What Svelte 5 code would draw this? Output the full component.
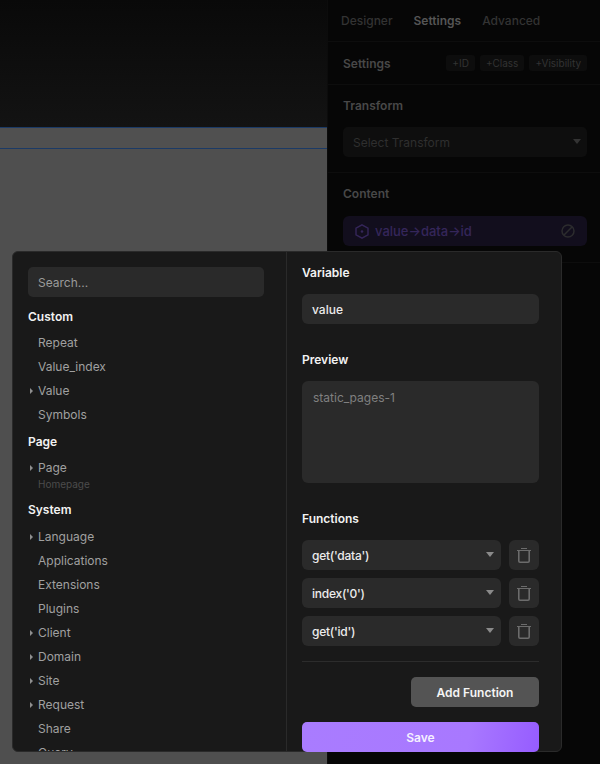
<script>
	const groups = [
		{
			title: 'Custom',
			items: [
				{ name: 'Repeat' },
				{ name: 'Value_index' },
				{ name: 'Value', arrow: true },
				{ name: 'Symbols' }
			]
		},
		{
			title: 'Page',
			items: [{ name: 'Page', arrow: true, sub: 'Homepage' }]
		},
		{
			title: 'System',
			items: [
				{ name: 'Language', arrow: true },
				{ name: 'Applications' },
				{ name: 'Extensions' },
				{ name: 'Plugins' },
				{ name: 'Client', arrow: true },
				{ name: 'Domain', arrow: true },
				{ name: 'Site', arrow: true },
				{ name: 'Request', arrow: true },
				{ name: 'Share' },
				{ name: 'Query' }
			]
		}
	];
	const functions = ["get('data')", "index('0')", "get('id')"];
</script>

<div class="app">
	<div class="workspace">
		<div class="topbar"></div>
		<div class="canvas">
			<div class="canvas-strip"></div>
		</div>
	</div>

	<aside class="sidebar">
		<nav class="tabs">
			<span>Designer</span>
			<span class="active">Settings</span>
			<span>Advanced</span>
		</nav>
		<section class="settings-row">
			<h4>Settings</h4>
			<div class="chips">
				<span>+ID</span>
				<span>+Class</span>
				<span>+Visibility</span>
			</div>
		</section>
		<section class="side-section transform">
			<h4>Transform</h4>
			<div class="side-select">
				Select Transform
				<i class="caret"></i>
			</div>
		</section>
		<section class="side-section content">
			<h4>Content</h4>
			<div class="binding">
				<svg width="14" height="15" viewBox="0 0 14 15" fill="none" stroke="currentColor" stroke-width="1.4">
					<path d="M7 .8 13 4.2V10.8L7 14.2 1 10.8V4.2Z" />
					<circle cx="7" cy="7.5" r="1.3" fill="currentColor" stroke="none" />
				</svg>
				<span>value→data→id</span>
				<svg class="ban" width="14" height="14" viewBox="0 0 14 14" fill="none" stroke="currentColor" stroke-width="1.5">
					<circle cx="7" cy="7" r="6" />
					<path d="M2.8 11.2 11.2 2.8" />
				</svg>
			</div>
		</section>
	</aside>

	<div class="modal">
		<div class="picker">
			<div class="search">Search...</div>
			{#each groups as group}
				<h5>{group.title}</h5>
				<ul>
					{#each group.items as item}
						<li class:has-sub={item.sub}>
							{#if item.arrow}<i class="arrow"></i>{/if}
							{item.name}
							{#if item.sub}<small>{item.sub}</small>{/if}
						</li>
					{/each}
				</ul>
			{/each}
		</div>
		<div class="editor">
			<h5>Variable</h5>
			<div class="field value">value</div>
			<h5 class="preview-title">Preview</h5>
			<div class="field preview">static_pages-1</div>
			<h5 class="functions-title">Functions</h5>
			<div class="functions">
				{#each functions as fn}
					<div class="fn-row">
						<div class="field fn">
							{fn}
							<i class="caret"></i>
						</div>
						<button class="trash" aria-label="Delete">
							<svg width="14" height="15" viewBox="0 0 14 15" fill="none" stroke="currentColor">
								<path d="M4 .5H10M0 2.5H14" stroke-width="1" />
								<path d="M1.8 3V13A1.2 1.2 0 0 0 3 14.2H11A1.2 1.2 0 0 0 12.2 13V3" stroke-width="1.6" />
							</svg>
						</button>
					</div>
				{/each}
			</div>
			<hr />
			<button class="add">Add Function</button>
			<button class="save">Save</button>
		</div>
	</div>
</div>

<style>
	:global(body) {
		margin: 0;
		background: #050505;
		font-family: Inter, "Liberation Sans", sans-serif;
	}
	h4, h5, ul {
		margin: 0;
		padding: 0;
	}
	.app {
		position: relative;
		display: flex;
		width: 600px;
		height: 764px;
		overflow: hidden;
	}

	.workspace {
		display: flex;
		flex-direction: column;
		width: 327px;
	}
	.topbar {
		height: 127px;
		background: linear-gradient(#090909, #131313);
	}
	.canvas {
		flex: 1;
		background: #4f4f4f;
	}
	.canvas-strip {
		height: 20px;
		border-top: 1px solid #1b3a66;
		border-bottom: 1px solid #1b3a66;
		background: #505050;
	}

	.sidebar {
		flex: 1;
		background: #060606;
		border-left: 1px solid #0c0c0c;
		color: #444;
	}
	.tabs {
		display: flex;
		gap: 21px;
		height: 42px;
		box-sizing: border-box;
		align-items: center;
		padding-left: 13px;
		font-size: 12px;
		font-weight: 500;
		color: #333;
		border-bottom: 1px solid #0d0d0d;
	}
	.tabs .active {
		color: #555;
		font-weight: 600;
	}
	h4 {
		font-size: 12px;
		line-height: 15px;
		font-weight: 600;
		color: #484848;
	}
	.settings-row {
		display: flex;
		align-items: center;
		justify-content: space-between;
		height: 43px;
		box-sizing: border-box;
		padding: 0 13px 0 15px;
		border-bottom: 1px solid #0d0d0d;
	}
	.chips {
		display: flex;
		gap: 5px;
	}
	.chips span {
		padding: 0 6px;
		height: 16px;
		line-height: 16px;
		border-radius: 3px;
		background: #0d0d0d;
		font-size: 10px;
		color: #333;
	}
	.side-section {
		padding: 13px 13px 0 15px;
		box-sizing: border-box;
		border-bottom: 1px solid #0d0d0d;
	}
	.transform {
		height: 88px;
	}
	.content {
		height: 90px;
	}
	.side-select {
		position: relative;
		height: 30px;
		line-height: 31px;
		margin-top: 14px;
		padding-left: 10px;
		border-radius: 5px;
		background: #0e0e0e;
		font-size: 12px;
		color: #2f2f2f;
	}
	.side-select .caret {
		right: 6px;
		border-top-color: #333;
	}
	.binding {
		display: flex;
		align-items: center;
		gap: 6px;
		height: 30px;
		margin-top: 15px;
		padding: 0 12px;
		border-radius: 6px;
		background: #120e1d;
		color: #35265a;
		font-size: 13px;
		font-weight: 500;
	}
	.ban {
		margin-left: auto;
		color: #2c2c2e;
	}

	.caret {
		position: absolute;
		right: 7px;
		top: 50%;
		margin-top: -3px;
		border-left: 4.5px solid transparent;
		border-right: 4.5px solid transparent;
		border-top: 5px solid #8a8a8a;
	}

	.modal {
		position: absolute;
		left: 12px;
		top: 251px;
		display: flex;
		width: 550px;
		height: 501px;
		box-sizing: border-box;
		background: #191919;
		border: 1px solid #2a2a2a;
		border-radius: 6px;
	}
	.picker {
		width: 274px;
		flex: none;
		box-sizing: border-box;
		padding: 15px 22px 0 15px;
		border-right: 1px solid #2a2a2a;
		overflow: hidden;
	}
	.search {
		height: 30px;
		line-height: 31px;
		padding-left: 10px;
		border-radius: 5px;
		background: #2a2a2a;
		font-size: 12px;
		color: #9a9a9a;
		margin-bottom: 12px;
	}
	h5 {
		font-size: 12px;
		line-height: 16px;
		font-weight: 600;
		color: #f2f2f2;
	}
	.picker ul {
		list-style: none;
		padding: 6px 0 7px;
	}
	.picker ul:last-child {
		padding-top: 7px;
	}
	.picker li {
		position: relative;
		height: 24px;
		line-height: 24px;
		padding-left: 10px;
		font-size: 12px;
		color: #a0a0a0;
	}
	.picker li.has-sub {
		height: 39px;
	}
	.picker small {
		display: block;
		margin-top: -3px;
		line-height: 14px;
		font-size: 10px;
		color: #4c4c4c;
	}
	.arrow {
		position: absolute;
		left: 2px;
		top: 9px;
		border-top: 3px solid transparent;
		border-bottom: 3px solid transparent;
		border-left: 3px solid #8f8f8f;
	}

	.editor {
		flex: 1;
		padding: 13px 22px 0 15px;
		display: flex;
		flex-direction: column;
	}
	.editor > * {
		flex: none;
	}
	.field {
		position: relative;
		height: 30px;
		line-height: 31px;
		padding-left: 10px;
		border-radius: 6px;
		background: #2a2a2a;
		font-size: 12px;
		font-weight: 500;
		color: #ececec;
	}
	.value {
		margin-top: 13px;
	}
	.preview-title {
		margin-top: 28px;
	}
	.preview {
		height: 102px;
		margin-top: 13px;
		line-height: 34px;
		padding-left: 11px;
		font-weight: 400;
		color: #808080;
	}
	.functions-title {
		margin-top: 28px;
	}
	.functions {
		display: flex;
		flex-direction: column;
		gap: 8px;
		margin-top: 13px;
	}
	.fn-row {
		display: flex;
		gap: 8px;
	}
	.fn {
		flex: 1;
		letter-spacing: -0.25px;
	}
	.trash {
		width: 30px;
		height: 30px;
		padding: 0;
		display: flex;
		align-items: center;
		justify-content: center;
		border: none;
		border-radius: 6px;
		background: #2a2a2a;
		color: #6c6c6c;
	}
	hr {
		width: 100%;
		margin: 15px 0;
		border: none;
		border-top: 1px solid #2c2c2c;
	}
	.add {
		align-self: flex-end;
		width: 128px;
		height: 30px;
		border: none;
		border-radius: 5px;
		background: #545454;
		color: #f5f5f5;
		font: 600 12px Inter, "Liberation Sans", sans-serif;
	}
	.save {
		height: 30px;
		margin-top: 15px;
		border: none;
		border-radius: 5px;
		background: linear-gradient(100deg, #a97cff 0%, #a878ff 70%, #965cff 100%);
		color: #f5f0ff;
		font: 600 12px Inter, "Liberation Sans", sans-serif;
	}
</style>
